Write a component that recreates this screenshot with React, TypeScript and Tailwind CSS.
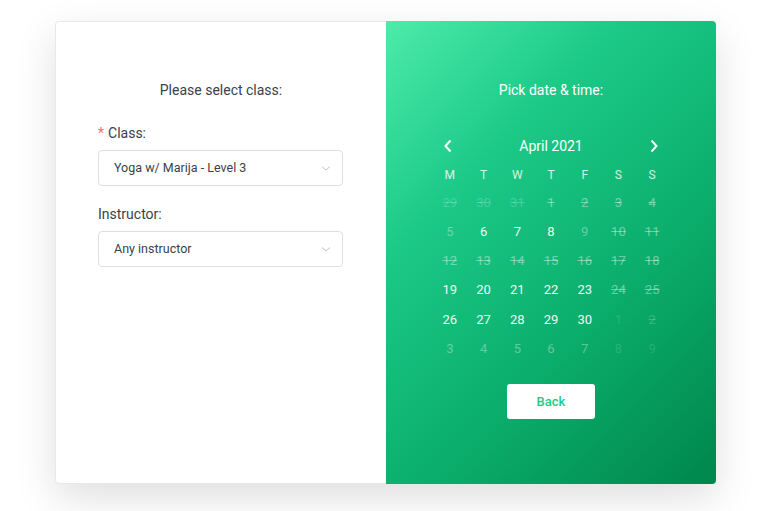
import React from "react";

type Day = { n: number; kind: "active" | "strike" | "faded" | "dim" | "dimstrike" | "prevstrike" };

const rows: Day[][] = [
  [
    { n: 29, kind: "prevstrike" },
    { n: 30, kind: "prevstrike" },
    { n: 31, kind: "prevstrike" },
    { n: 1, kind: "strike" },
    { n: 2, kind: "strike" },
    { n: 3, kind: "strike" },
    { n: 4, kind: "strike" },
  ],
  [
    { n: 5, kind: "faded" },
    { n: 6, kind: "active" },
    { n: 7, kind: "active" },
    { n: 8, kind: "active" },
    { n: 9, kind: "faded" },
    { n: 10, kind: "strike" },
    { n: 11, kind: "strike" },
  ],
  [12, 13, 14, 15, 16, 17, 18].map((n) => ({ n, kind: "strike" as const })),
  [
    { n: 19, kind: "active" },
    { n: 20, kind: "active" },
    { n: 21, kind: "active" },
    { n: 22, kind: "active" },
    { n: 23, kind: "active" },
    { n: 24, kind: "strike" },
    { n: 25, kind: "strike" },
  ],
  [
    { n: 26, kind: "active" },
    { n: 27, kind: "active" },
    { n: 28, kind: "active" },
    { n: 29, kind: "active" },
    { n: 30, kind: "active" },
    { n: 1, kind: "dim" },
    { n: 2, kind: "dimstrike" },
  ],
  [
    { n: 3, kind: "faded" },
    { n: 4, kind: "faded" },
    { n: 5, kind: "faded" },
    { n: 6, kind: "faded" },
    { n: 7, kind: "faded" },
    { n: 8, kind: "dim" },
    { n: 9, kind: "dim" },
  ],
];

function dayClass(k: Day["kind"]) {
  switch (k) {
    case "active":
      return "text-white/95";
    case "strike":
      return "text-white/40 line-through";
    case "faded":
      return "text-white/35";
    case "dim":
      return "text-white/15";
    case "dimstrike":
      return "text-white/20 line-through";
    case "prevstrike":
      return "text-white/20 line-through";
  }
}

function Chevron() {
  return (
    <svg width="12" height="12" viewBox="0 0 12 12" className="text-[#c0c4cc]">
      <path d="M2 4.5 L6 8 L10 4.5" fill="none" stroke="currentColor" strokeWidth="1" />
    </svg>
  );
}

function Select({ value }: { value: string }) {
  return (
    <div className="flex h-[36px] w-[245px] items-center justify-between rounded-[4px] border border-[#dcdfe6] bg-white pl-[15px] pr-[10px] text-[12.5px] text-[#3a3f4b]">
      <span>{value}</span>
      <Chevron />
    </div>
  );
}

export default function App() {
  const weekdays = ["M", "T", "W", "T", "F", "S", "S"];
  return (
    <div
      className="h-[511px] w-[774px] bg-white pl-[55px] pt-[21px]"
      style={{ fontFamily: "Roboto, 'Noto Sans', sans-serif" }}
    >
      <div className="flex h-[463px] w-[661px] rounded-[4px] shadow-[0_14px_40px_rgba(0,0,0,0.13)]">
        <div className="flex w-[331px] flex-col rounded-l-[4px] border border-r-0 border-[#e8e8e8] bg-white">
          <div className="mt-[59px] text-center text-[14px] leading-[18px] text-[#3a3f4b]">Please select class:</div>
          <div className="ml-[42px] mt-[25px] text-[14px] leading-[18px] text-[#3a3f4b]">
            <span className="mr-[4px] text-[#f56c6c]">*</span>Class:
          </div>
          <div className="ml-[42px] mt-[8px]">
            <Select value="Yoga w/ Marija - Level 3" />
          </div>
          <div className="ml-[42px] mt-[19px] text-[14px] leading-[18px] text-[#3a3f4b]">Instructor:</div>
          <div className="ml-[42px] mt-[8px]">
            <Select value="Any instructor" />
          </div>
        </div>
        <div className="flex w-[330px] flex-col items-center rounded-r-[4px] bg-[linear-gradient(135deg,#4debaa_0%,#1cc987_30%,#0aac6a_65%,#00864c_100%)] text-white">
          <div className="mt-[60px] text-[14px] leading-[18px]">Pick date &amp; time:</div>
          <div className="mt-[38px] flex w-[236px] items-center justify-between px-[10px]">
            <svg width="10" height="14" viewBox="0 0 10 14">
              <path d="M7.5 1.5 L2.5 7 L7.5 12.5" fill="none" stroke="white" strokeWidth="2" />
            </svg>
            <span className="text-[14px] leading-[18px]">April 2021</span>
            <svg width="10" height="14" viewBox="0 0 10 14">
              <path d="M2.5 1.5 L7.5 7 L2.5 12.5" fill="none" stroke="white" strokeWidth="2" />
            </svg>
          </div>
          <div className="mt-[8px] grid w-[236px] grid-cols-7">
            {weekdays.map((d, i) => (
              <div key={i} className="flex h-[24px] items-center justify-center text-[12px] text-white/80">
                {d}
              </div>
            ))}
          </div>
          <div className="mt-[1px] grid w-[236px] grid-cols-7">
            {rows.flat().map((d, i) => (
              <div key={i} className={`flex h-[29.2px] items-center justify-center text-[13px] ${dayClass(d.kind)}`}>
                {d.n}
              </div>
            ))}
          </div>
          <button className="mt-[21px] flex h-[35px] w-[88px] items-center justify-center rounded-[3px] bg-white text-[13px] font-medium text-[#1cc98a]">
            Back
          </button>
        </div>
      </div>
    </div>
  );
}
